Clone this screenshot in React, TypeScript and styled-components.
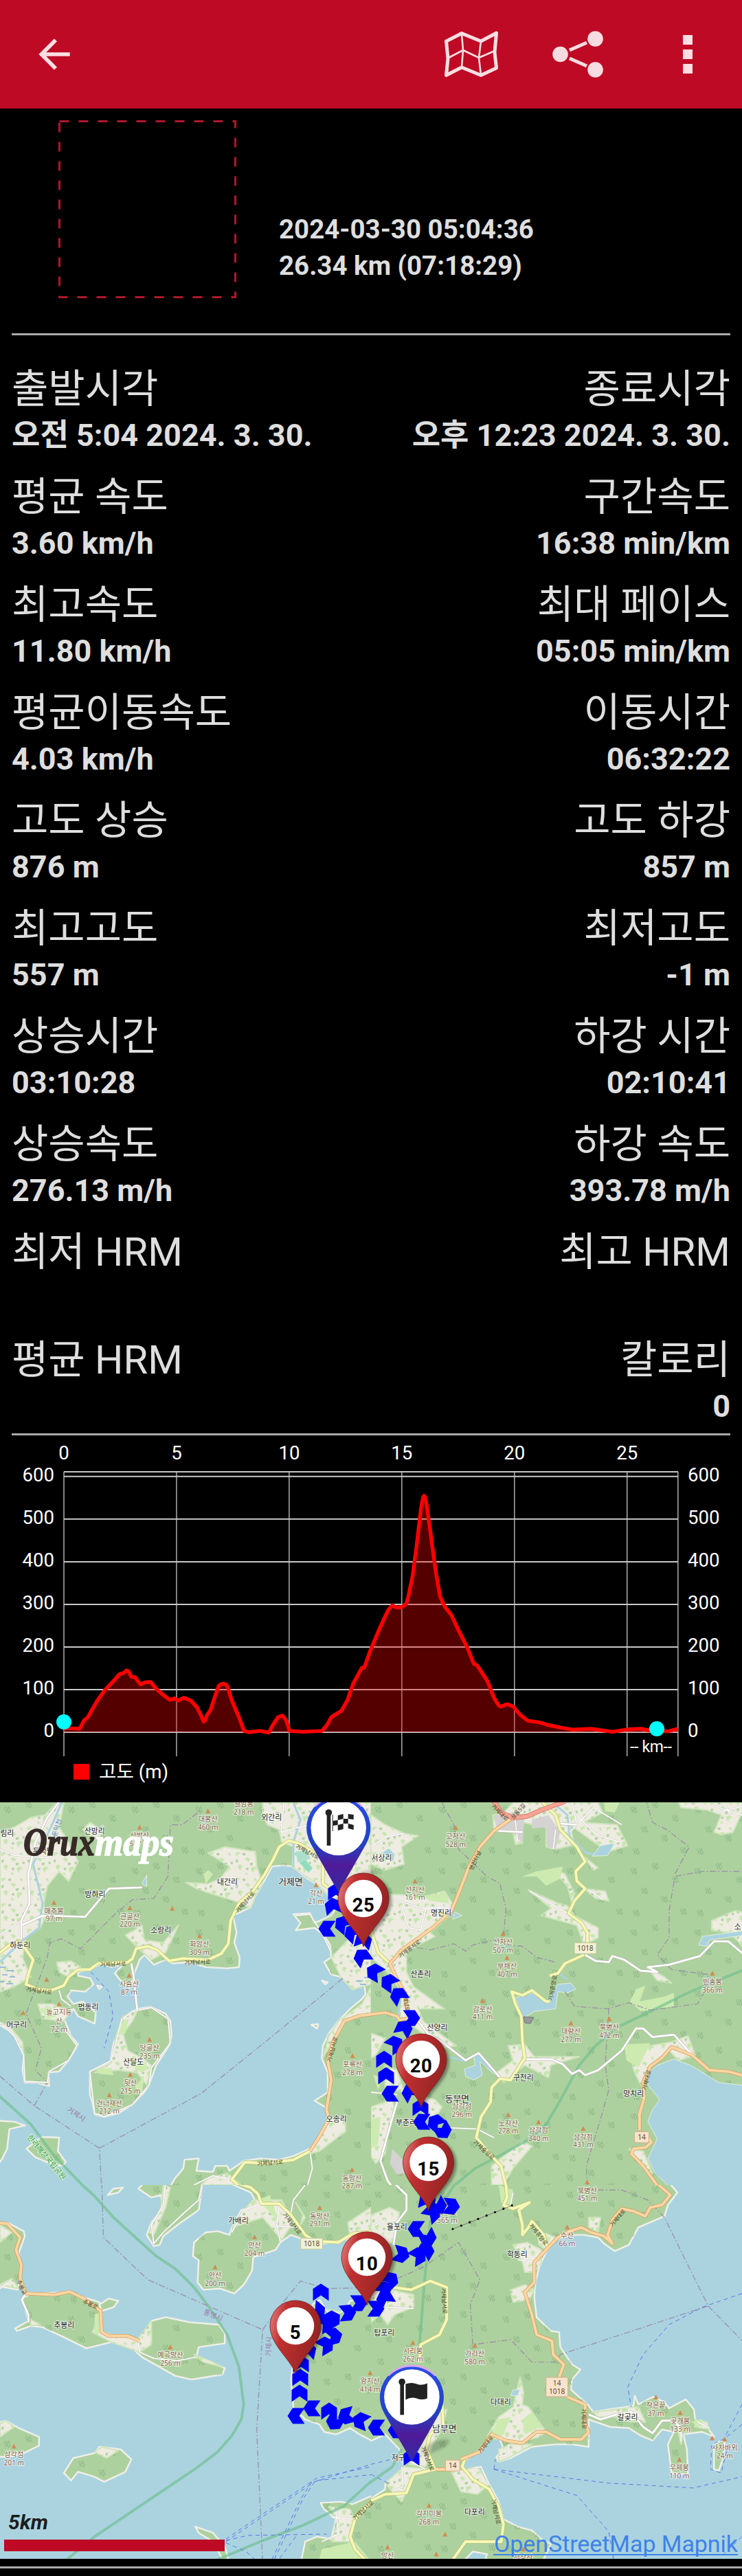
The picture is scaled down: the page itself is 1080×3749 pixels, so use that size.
import styled, { createGlobalStyle } from "styled-components";

const GlobalStyle = createGlobalStyle`
  body {
    margin: 0;
    background: #000;
    font-family: Roboto, "Noto Sans CJK KR", sans-serif;
  }
`;

const Page = styled.div`
  width: 1080px;
  height: 3749px;
  overflow: hidden;
  background: #000;
  color: #dedede;
`;

const Toolbar = styled.header`
  display: flex;
  align-items: center;
  height: 158px;
  padding: 0 72px 0 45px;
  box-sizing: border-box;
  background: #be0a25;
`;

const Spacer = styled.div`
  flex: 1;
`;

const Actions = styled.div`
  display: flex;
  align-items: center;
  gap: 78px;
`;

const Summary = styled.section`
  display: flex;
  height: 327px;
  padding-left: 84px;
  box-sizing: border-box;
`;

const SummaryText = styled.div`
  padding: 149px 0 0 60px;
  font-size: 38.5px;
  font-weight: 700;
  line-height: 53px;
`;

const TypeBox = styled.svg`
  margin-top: 16px;
`;

const Divider = styled.hr`
  height: 3px;
  margin: 0 17px;
  border: 0;
  background: #aaa;
`;

const Stats = styled.section`
  display: grid;
  grid-template-columns: auto auto;
  grid-auto-rows: 157px;
  height: 1598px;
  padding: 39px 17px 0;
  box-sizing: border-box;
`;

const Stat = styled.div<{ $right?: boolean }>`
  text-align: ${({ $right }) => ($right ? "right" : "left")};
  white-space: nowrap;
`;

const StatLabel = styled.div`
  height: 74px;
  font-size: 58px;
  font-weight: 400;
  line-height: 79px;
`;

const StatValue = styled.div`
  height: 66px;
  font-size: 45px;
  font-weight: 700;
  line-height: 66px;
`;

const ChartSvg = styled.svg`
  display: block;
  font-size: 27.6px;
  fill: #fff;
`;

const MapSvg = styled.svg`
  display: block;
`;

const Footer = styled.div`
  padding-top: 11px;
  height: 14px;
  box-sizing: content-box;
`;

const FooterLine = styled.div`
  height: 3px;
  background: #aaa;
`;

/* ---------- stats ---------- */

const stats: [string, string, string, string][] = [
  ["출발시각", "오전 5:04 2024. 3. 30.", "종료시각", "오후 12:23 2024. 3. 30."],
  ["평균 속도", "3.60 km/h", "구간속도", "16:38 min/km"],
  ["최고속도", "11.80 km/h", "최대 페이스", "05:05 min/km"],
  ["평균이동속도", "4.03 km/h", "이동시간", "06:32:22"],
  ["고도 상승", "876 m", "고도 하강", "857 m"],
  ["최고고도", "557 m", "최저고도", "-1 m"],
  ["상승시간", "03:10:28", "하강 시간", "02:10:41"],
  ["상승속도", "276.13 m/h", "하강 속도", "393.78 m/h"],
  ["최저 HRM", "", "최고 HRM", ""],
  ["평균 HRM", "", "칼로리", "0"],
];

/* ---------- altitude chart ---------- */

// km, metres
const profile: [number, number][] = [
  [0, 9], [0.35, 9], [0.7, 8], [0.9, 28], [1.06, 35], [1.48, 74], [1.84, 100],
  [2.2, 120], [2.47, 136], [2.65, 139], [2.78, 145], [2.87, 143], [3, 130],
  [3.16, 129], [3.4, 112], [3.6, 117], [3.85, 118], [4.1, 102], [4.4, 88],
  [4.7, 76], [4.9, 80], [5.07, 74], [5.32, 81], [5.64, 74], [5.9, 59],
  [6.1, 38], [6.2, 25], [6.28, 28], [6.35, 40], [6.5, 51], [6.7, 83],
  [6.87, 108], [6.95, 112], [7.08, 114], [7.2, 112], [7.27, 106], [7.46, 74],
  [7.78, 34], [8, 3], [8.2, 0], [8.7, 3], [9.1, -1], [9.25, 15], [9.5, 35],
  [9.7, 39], [9.87, 28], [10.02, 3], [10.6, 1], [11.45, 3], [11.66, 15],
  [11.87, 35], [12.33, 51], [12.6, 77], [12.84, 114], [13.23, 151],
  [13.33, 151], [13.6, 191], [13.97, 238], [14.2, 265], [14.4, 287],
  [14.58, 298], [14.7, 294], [14.85, 292], [15, 294], [15.2, 301],
  [15.3, 321], [15.48, 367], [15.65, 435], [15.86, 528], [15.95, 552],
  [15.98, 555], [16.03, 552], [16.1, 535], [16.28, 466], [16.5, 380],
  [16.7, 318], [16.9, 295], [17.2, 275], [17.5, 241], [17.9, 200],
  [18.2, 160], [18.33, 158], [18.8, 120], [19.1, 80], [19.3, 63], [19.4, 60],
  [19.68, 66], [19.95, 60], [20.27, 40], [20.6, 27], [21.1, 23], [21.5, 17],
  [22.15, 10], [22.6, 6], [23.4, 8], [24.35, 1], [25.1, 7], [25.6, 8],
  [26, 4], [26.8, 2], [27.26, 8],
];

const kmX = (km: number) => 93 + km * 32.79;
const altY = (m: number) => 432 - m * 0.6203;
const line = profile
  .map(([km, m]) => `${kmX(km).toFixed(1)},${altY(m).toFixed(1)}`)
  .join(" L");

const Chart = () => (
  <ChartSvg width="1080" height="534" viewBox="0 0 1080 534">
    <g stroke="#c8c8c8" fill="none">
      <path strokeWidth="2" d="M93,53 H987" />
      {[0, 100, 200, 300, 400, 500, 600].map((m) => (
        <path key={m} strokeWidth="2" d={`M93,${altY(m)} H987`} />
      ))}
      {[0, 5, 10, 15, 20, 25, 27.26].map((km) => (
        <path key={km} strokeWidth="1.3" d={`M${kmX(km)},53 V467`} />
      ))}
    </g>
    <path d={`M93,432 L${line} L987,432Z`} fill="#f00" fillOpacity=".33" />
    <path
      d={`M${line}`}
      fill="none"
      stroke="#f00"
      strokeWidth="5.4"
      strokeLinejoin="round"
    />
    <circle cx="93" cy="417" r="11" fill="#0ff" />
    <circle cx="956" cy="427" r="11" fill="#0ff" />
    {[0, 5, 10, 15, 20, 25].map((km) => (
      <text key={km} x={kmX(km)} y="34.5" textAnchor="middle">
        {km}
      </text>
    ))}
    {[0, 100, 200, 300, 400, 500, 600].map((m) => (
      <g key={m}>
        <text x="79" y={altY(m) + 7} textAnchor="end">
          {m}
        </text>
        <text x="1001" y={altY(m) + 7}>
          {m}
        </text>
      </g>
    ))}
    <text x="917" y="461" fontSize="23" textLength="61">
      -- km--
    </text>
    <rect x="107" y="478" width="23" height="23" fill="#f00" />
    <text x="144" y="499" textLength="101">
      고도 (m)
    </text>
  </ChartSvg>
);

/* ---------- map ---------- */

type Tile = {
  x: number;
  y: number;
  h: number;
  land: string;
  fields: string;
  grass?: string;
  urban?: string;
  lakes?: string;
  rivers?: string;
  trunk?: string;
  primary: string;
  secondary: string;
  minor: string;
  lanes?: string;
  border: string;
  park: string;
  ferry?: string;
};

// Every tile draws on its own 1568 x 1568 grid.
const GRID = 1568;
const TILE_W = 540;

const tiles: Tile[] = [
  {
    x: 0, y: -3, h: 560,
    land: "M-20,905 L40,940 90,985 100,1040 95,1100 105,1150 150,1150 208,1165 205,1110 250,1105 290,1060 330,995 300,960 270,890 310,850 330,880 400,910 405,865 350,820 310,830 285,800 300,775 360,780 395,750 380,725 330,715 330,700 385,690 430,665 470,680 520,670 485,705 510,735 550,765 570,700 590,650 610,630 650,670 700,650 730,665 800,660 870,680 960,685 1010,680 1013,640 990,580 1000,540 985,470 1050,440 1080,390 1110,340 1150,270 1200,265 1235,270 1300,320 1350,350 1400,400 1420,440 1400,470 1330,500 1310,460 1240,465 1270,500 1250,530 1330,520 1370,550 1395,590 1400,640 1370,660 1400,710 1440,720 1490,770 1540,755 1545,790 1530,810 1480,850 1430,900 1390,950 1365,1000 1360,1050 1385,1110 1385,1190 1330,1225 1375,1250 1390,1300 1360,1360 1310,1420 1240,1450 1180,1465 1100,1460 1030,1470 970,1510 960,1490 910,1490 900,1515 830,1510 840,1460 780,1465 775,1500 740,1540 710,1590 H1600 V-20 H-20Z M580,850 L640,842 700,870 720,900 725,960 715,1000 660,1080 630,1160 610,1190 560,1240 500,1275 440,1290 400,1280 390,1230 380,1200 380,1105 430,1085 465,1070 480,990 500,950 515,890 545,870Z M-20,1305 L60,1310 105,1325 40,1340 30,1420 10,1460 -20,1500Z M112,1420 L175,1372 250,1375 245,1430 278,1475 265,1490 200,1475 150,1455Z M1315,915 L1345,912 1340,930Z M1360,735 L1385,742 1375,750Z M410,755 L430,760 420,770Z",
    fields: "M0,130 L60,110 130,70 190,60 240,10 270,10 250,110 290,170 330,250 290,330 250,290 200,350 185,420 190,480 170,520 110,560 95,640 130,720 60,760 0,780 Z M1110,50 L1130,100 1180,120 1190,170 1240,190 1235,270 1350,350 1400,400 1568,400 V10 H1110Z M880,215 L950,190 1080,210 1085,270 1110,340 1080,390 1060,440 990,410 890,380 830,360 785,335 880,340 930,320 970,270Z M530,550 L600,510 610,570 690,580 755,508 730,560 700,620 640,650 580,600Z M160,830 L220,830 300,860 270,900 180,890Z M350,120 L380,90 440,130 400,160Z M240,660 L300,655 340,680 290,720 250,700Z M0,905 L40,920 95,985 100,1040 60,960Z M1430,900 L1530,830 1568,760 V870 L1460,890 1400,990 1365,1050 1390,960Z M1400,640 L1500,540 1568,540 V750 L1490,770 1440,720Z M1390,1300 L1460,1300 1460,1350 1350,1430 1310,1440Z M490,960 L520,880 580,860 560,900 520,950 540,1020 600,1050 640,1080 620,1160 580,1110 500,1100 400,1110 470,1070Z M880,1540 L960,1520 1020,1568 H850Z",
    grass: "M860,300 L880,285 900,300 870,340Z M410,1095 L470,1090 480,1120 420,1115Z M570,1170 L610,1120 600,1200Z M500,960 L520,900 545,890 530,950Z M540,1070 L600,1060 630,1090 600,1110Z M170,850 L210,840 240,880 200,890Z",
    lakes: "M425,110 L435,100 440,130Z M600,340 L620,305 620,350Z",
    rivers: "M265,0 L215,110 140,260 180,420 165,520 85,580 0,660 M1240,10 L1270,80 1240,170 1240,270",
    primary: "M1600,870 L1520,878 1455,900 1410,980 1385,1060 1400,1140 1380,1260 1390,1300 1350,1370 1310,1430",
    secondary: "M-20,635 L40,590 85,575 140,650 120,710 110,750 160,770 215,775 270,755 290,720 330,690 380,690 415,665 540,660 560,645 575,605 625,595 665,610 715,655 770,645 880,650 935,625 965,585 975,490 1010,420 1070,370 1120,300 1155,240 1180,190 1220,165 1260,175 1330,215 M1365,250 L1365,340 1420,380 M1030,1590 L980,1545 1035,1475 1130,1480 1240,1465 1310,1430",
    minor: "M255,0 L200,70 150,170 120,300 125,420 90,490 90,560 M90,510 L180,470 360,475 460,360 600,355 M555,665 L565,720 580,855",
    lanes: "M0,200 L60,225 210,235 M0,550 L90,490 M1200,10 L1188,130 1300,100 M0,905 L60,960 100,1040 105,1145 200,1150 208,1105 290,1060 325,1000 270,930 M250,775 L260,810 300,840 M520,890 L560,860 640,845 710,890 720,990 640,1090 630,1160 560,1240 440,1290 400,1275 380,1105 470,1060 515,890 M1250,470 L1310,465 1360,540 1400,620 M1310,1430 L1320,1500 1300,1568 M820,1568 L900,1530 980,1545",
    border: "M0,1125 L145,1245 420,1418 430,1590 M420,1418 L850,1195 1140,970 1450,725 M145,1245 L200,1150 150,1100 175,1010 110,870 200,640 210,580 260,565 340,605 490,460 560,405 650,400 710,310 720,100 770,100 850,40",
    park: "M-20,1190 L130,1320 230,1450 370,1590",
    ferry: "M385,700 L460,780 478,880 440,1010",
  },
  {
    x: 540, y: -3, h: 560,
    land: "M-30,-30 H1600 V1600 H-30Z",
    fields: "M0,380 L130,385 200,400 310,370 350,430 340,460 250,540 270,555 200,590 150,620 150,700 180,760 310,850 200,850 220,900 360,1000 300,1010 150,900 120,880 130,780 60,690 0,640Z M0,60 L60,100 140,135 200,145 130,190 140,260 60,285 0,260Z M515,60 L560,50 600,10 960,10 980,50 900,90 1040,100 1085,185 1000,210 840,100 860,180 780,200 740,190 740,110 640,90 640,175 610,180 600,130 520,125Z M1300,10 H1568 V50 L1530,130 1480,140 1450,130 1480,60 1420,40 1310,30Z M665,365 L790,420 830,430 860,470 900,490 960,520 960,560 900,590 870,510 720,470 760,440Z M770,285 L820,300 860,380 850,420 830,350Z M900,360 L990,370 1005,410 950,400Z M580,1000 L650,995 690,1045 880,1045 760,1080 750,1130 650,1080 560,1150 530,1110 600,1060Z M1090,1000 L1180,1000 1270,985 1340,960 1370,1040 1300,1060 1260,1020 1180,1080 1150,1180 1110,1100Z M0,950 L60,970 20,1040 0,1050Z M60,1080 L110,1100 140,1190 60,1170Z M190,1200 L270,1220 300,1250 260,1310 220,1280Z M0,1250 L90,1220 100,1260 70,1360 60,1440 20,1480 0,1450Z M1440,490 L1540,450 1590,460 V620 L1520,540 1440,530Z M1165,680 L1240,720 1270,745 1210,735Z M510,1490 L640,1390 680,1410 600,1500 560,1568 H510Z M1090,1420 L1150,1430 1190,1520 1140,1490Z M900,230 L960,275 940,285Z",
    grass: "M635,312 L700,290 810,270 800,320 740,348 700,310Z M1095,820 L1120,770 1160,755 1135,820 1240,800 1280,785 1280,840 1140,860Z M985,10 H1050 L1030,50 990,45Z M1070,995 L1180,990 1130,1090 1080,1060Z M0,1300 L40,1290 30,1400 0,1420Z M10,1120 L50,1130 30,1180Z M210,390 L320,380 330,420 250,410Z",
    urban: "M520,60 L600,50 650,60 640,175 600,130 530,125Z M680,80 L750,60 800,130 780,200 745,190 740,110 680,115Z M90,1420 L140,1470 140,1520 110,1525 80,1480Z",
    lakes: "M610,805 L680,785 745,825 790,750 845,745 865,770 830,785 790,780 780,850 690,860 650,885 640,880Z M1175,1110 L1210,1080 1280,1055 1350,1080 1420,1120 1470,1150 1600,1165 V1600 H1290 L1200,1520 1170,1460 1210,1380 1170,1310 1190,1260 1220,1220 1170,1160Z M935,228 L970,185 1030,175 1000,225Z M395,1095 L440,1080 435,1045 455,1035 545,1120 520,1115 460,1065 470,1120 435,1140 400,1125Z M1385,590 L1400,555 1590,530 V548 L1430,570 1420,595Z M345,485 L355,455 385,470Z M45,215 L75,195 100,220 95,250Z",
    rivers: "M780,20 L830,60 840,150 910,215 950,220 M800,710 L830,730 M330,1045 L400,1065 M110,900 L130,780",
    trunk: "M510,-10 L550,50 600,72 660,65 720,40 820,5",
    primary: "M600,70 L520,125 460,190 410,280 370,380 340,450 260,520 130,610 80,665 110,730 140,780 155,850 M-20,875 L60,865 110,880 120,895 155,890 M1600,1130 L1510,1105 1430,1100 1360,1040 1270,1005 1230,1050 1180,1085 1150,1150 1155,1210 1135,1280 1135,1345 M1175,1375 L1185,1395 1160,1415 1110,1420 1100,1440 1150,1490 1225,1590",
    secondary: "M725,10 L780,60 800,120 870,190 905,250 865,290 870,330 905,360 860,410 835,460 890,500 915,540 915,580 M900,630 L820,665 790,705 755,715 M755,820 L740,820 680,775 640,795 595,780 610,830 635,880 640,980 650,1050 590,1140 545,1135 510,1170 505,1230 465,1290 445,1375 510,1450 550,1490 575,1590 M0,530 L30,620 80,665",
    minor: "M905,630 L950,655 1005,660 1020,635 1070,650 1140,695 1210,700 1170,680 1260,670 1390,635 1450,575 1510,575 1590,640 M650,1055 L760,1055 810,1075 850,1115 880,1100 905,1120 960,1100 1060,1020 1120,930 1150,930 1190,965 1280,955 1340,1020 1370,1040 M200,900 L240,950 300,985 400,1060 455,1030 545,1130 M110,1230 L80,1330 40,1470 70,1550 100,1590 M540,125 L640,130 M790,95 L870,100",
    lanes: "M0,190 L60,150 140,135 M75,400 L220,440 340,435 M130,430 L160,520 210,530 235,430 M850,10 L870,100 840,130 M870,60 L950,140 1050,170 M880,90 L940,30 1060,100 M1440,20 L1568,60 M1460,50 L1568,25 M1490,10 L1520,60 M920,365 L980,405 M670,370 L830,460 M330,1335 L450,1340 520,1375 M0,1190 L110,1200 M780,120 L770,200 M610,80 L620,170",
    border: "M300,10 L350,100 370,200 490,310 545,340 570,440 560,560 430,590 400,615 350,585 250,610 190,600 M570,590 L640,595 700,640 780,660 M820,780 L860,840 1000,850 1090,825 1180,855 1380,830 1410,780 1425,710 1270,690 1210,630 1260,560 1260,450 1285,310 1400,290 1568,290 M1285,300 L1345,190 1250,120 1190,90 1165,10 M1005,850 L990,1080 1005,1180 970,1300 910,1490 915,1590",
    park: "M1590,685 L1350,780 1150,875 1040,925 950,1000 880,1080 790,1240 740,1320 670,1380 560,1440 440,1500 340,1580",
  },
  {
    x: 0, y: 557, h: 569,
    land: "M-20,150 L30,150 100,185 105,205 80,270 90,340 75,420 20,410 -20,400Z M95,455 L130,435 290,430 420,470 430,590 470,600 585,620 640,545 700,530 800,550 925,560 950,595 950,635 840,650 830,690 900,715 950,735 940,760 810,780 740,765 600,690 560,655 470,630 365,655 280,615 180,570 130,565 70,585 65,575 120,545Z M420,480 L460,455 500,465 480,490 430,505Z M-20,955 L25,945 80,975 165,1010 165,1045 100,1075 40,1090 -20,1090Z M270,1155 L310,1095 400,1075 420,1050 510,1060 555,1100 530,1150 440,1190 400,1170 330,1150 300,1185Z M455,40 L480,15 520,10 500,30Z M585,15 L640,50 680,40 690,90 640,150 620,200 650,245 675,240 690,205 750,160 840,100 858,-20 H620Z M940,-20 H1600 V185 L1480,215 1370,235 1300,225 1230,200 1185,230 1165,260 1070,290 1065,345 1030,400 990,435 930,415 860,420 835,390 840,300 815,285 820,230 870,190 920,185 970,200 980,170 1020,100 1090,80 1060,30Z M1600,440 L1480,465 1460,500 1400,530 1350,460 1320,480 1380,560 1330,640 1240,700 1230,780 1240,890 1290,940 1350,960 1370,990 1420,1000 1480,975 1520,1000 1600,1040Z M1355,1275 L1440,1270 1490,1280 1600,1235 V1520 H1270 L1290,1430 1340,1410 1400,1420 1420,1340 1370,1300Z M825,1370 L900,1395 950,1450 970,1520 940,1500 900,1430 840,1395Z",
    fields: "M0,160 L50,190 0,230Z M0,400 L50,375 80,415Z M390,590 L430,500 430,590 580,620 640,545 640,640 590,670 470,630Z M0,955 L25,945 60,970 0,1010Z M400,1070 L430,1050 500,1065 450,1095Z M1070,60 L1190,60 1240,150 1190,220 1110,130 980,170 1030,100Z M1290,130 L1250,70 1280,120 1270,160Z M1470,150 L1568,90 V200 L1480,215Z M690,0 L720,10 700,90 650,200 630,190 680,90Z M1390,1290 L1480,1300 1500,1350 1480,1430 1400,1430 1430,1350Z M820,680 L900,710 940,730 860,710Z M130,540 L170,560 130,565Z M1390,500 L1440,510 1400,530Z",
    grass: "M400,520 L430,510 430,580 400,600Z M1360,1460 L1500,1430 1560,1500 H1350Z M1470,1500 L1480,1400 1520,1470Z M1180,150 L1090,60 1140,40Z",
    primary: "M-20,150 L30,155 85,210 68,260 90,320 85,375 110,435 230,440 295,428 355,455 425,505 430,590 460,605 540,605 590,625",
    secondary: "M960,-20 L1060,10 1090,35 1105,75 1180,75 1230,120 1290,200 1330,225 1430,230 1490,195 1590,185 M1590,1250 L1500,1340 1480,1410 1500,1460 1550,1510",
    minor: "M110,435 L92,460 120,520 120,550",
    lanes: "M585,630 L590,670 650,695 750,705 830,690 M700,-10 L690,80 640,160 650,235 690,190 780,110 840,60 855,-10 M980,190 L1030,100 1105,75 M1180,80 L1170,160 1185,230 M1170,165 L1260,170 M1290,0 L1240,60 1230,110 M1400,1330 L1490,1340 M1420,1310 L1430,1400 1360,1430 M0,415 L40,390",
    border: "M430,-10 L437,210 625,380 1110,580 1085,980 1110,1510 M1110,580 L1180,490 1270,385 1380,415 1568,412",
    park: "M325,-20 L400,45 480,130 660,285 740,335 820,410 880,485 960,600 1010,730 1030,880 1020,940 980,1005 920,1070 830,1135 400,1410 260,1520 M900,1510 L1100,1430 1280,1365 1390,1315 1450,1290 1590,1170",
    ferry: "M955,1430 L1110,1330 1330,1190 1568,1120 M955,1420 L1110,1320 1340,1175 1568,1130 M1340,1185 L1568,1162 M1330,1190 L1280,1260 1160,1500 M1318,1190 L1270,1260 1150,1500 M955,1425 L1050,1405 1380,1400 M955,1435 L1040,1470 1075,1500 M1250,1410 L1180,1500",
  },
  {
    x: 540, y: 557, h: 569,
    land: "M-20,-20 H1250 L1295,30 1255,80 1240,125 1130,170 1090,240 1030,265 985,235 960,210 900,200 840,200 780,220 740,270 710,330 695,390 690,450 700,530 760,585 795,590 800,650 850,720 885,740 850,780 845,820 915,880 940,910 1000,900 1080,890 1110,885 1115,845 1130,880 1190,850 1240,870 1260,895 1330,860 1365,900 1370,940 1420,970 1450,1010 1400,990 1320,1000 1335,1060 1340,1160 1270,1155 1255,1040 1280,990 1230,980 1190,1025 1140,1005 1090,975 1010,970 920,940 920,1050 850,1040 780,1040 680,1050 590,1095 540,1110 530,1090 560,1060 545,1020 500,1010 460,1060 390,1110 395,1150 450,1130 500,1200 540,1270 560,1340 620,1370 680,1385 720,1420 760,1440 720,1520 H480 L490,1480 430,1470 380,1520 H-20 V1270 L60,1220 60,1195 130,1210 140,1130 120,1060 60,1000 -20,1035Z M1450,1035 L1495,1025 1490,1090 1470,1145 1450,1140Z",
    fields: "M0,420 L90,420 180,440 180,490 100,520 70,560 40,520 0,550Z M0,120 L80,90 120,110 100,220 40,260 0,180Z M490,1010 L540,930 600,890 630,770 645,830 640,880 665,890 740,990 710,1010 600,1040 560,1020Z M600,240 L660,230 720,260 720,310 690,350 650,350 640,310Z M590,420 L650,400 690,420 670,460 600,470Z M340,1150 L400,1140 450,1130 500,1200 450,1240 380,1230Z M250,900 L320,900 300,980 260,1040 230,1130 160,1120 190,1090 240,1000Z M60,1195 L140,1130 250,1140 180,1160 130,1270 90,1230Z M1090,890 L1130,890 1160,950 1110,950 1040,940Z M940,910 L1080,895 1090,930 960,930Z M1370,940 L1420,950 1430,980 1370,970Z M920,130 L970,130 960,190 920,170Z M700,180 L780,210 740,260 710,240Z M1295,970 L1320,1000 1310,1040Z M540,1060 L590,1040 680,1040 590,1090 540,1110Z",
    grass: "M540,0 L600,20 590,80 550,70Z M480,1040 L540,940 590,930 560,1000Z M640,940 L680,910 720,970 650,1000Z M1350,950 L1400,940 1400,970Z M680,190 L760,210 740,240Z",
    lakes: "M590,845 L600,822 630,820 620,845Z",
    primary: "M1205,-10 L1265,40 1230,80 1180,90 1160,125 1110,105 1060,95 1020,140 1000,200 1020,235 985,205 930,190 890,170 840,185 790,210 690,310 690,390 650,430 680,520 700,600 765,625 770,680 815,720 795,770 M830,850 L905,880 905,960 920,990 890,1020 800,1020 740,990 700,990 640,1035 570,1025 510,1000 460,1070 380,1100 M320,1140 L275,1140",
    secondary: "M570,-10 L575,50 560,80 600,95 670,70 625,100 640,160 640,200 665,170 680,145 730,200 745,250 M90,410 L170,420 250,385 320,410 320,540 290,600 210,640 205,710 M300,870 L305,960 250,1000 235,1060 270,1140 180,1160 150,1235 60,1240 -20,1275 M400,1090 L385,1130 430,1180 500,1220 540,1290 560,1360 550,1430 480,1430 400,1430 340,1510",
    minor: "M95,-10 L150,40 150,100 110,150 95,240 M920,920 L970,940 1040,920 1100,910 1150,970 1190,995 1230,945 1270,945 1310,970",
    lanes: "M60,490 L180,495 M620,300 L700,310 720,270 M700,290 L710,340 M130,1130 L135,1210 90,1230 M170,1110 L230,1140 M430,1135 L465,1130 500,1200 M540,1090 L580,1080 580,1040 M600,30 L590,80 M1310,970 L1310,1030 M1380,950 L1430,975 M0,170 L60,140",
    border: "M110,375 L220,330 370,230 460,380 420,480 430,640 590,620 680,710 780,710 800,680 1425,485 1240,130 1170,60 1060,20 960,20 M1425,485 L1590,645",
    park: "M365,-20 L250,150 225,400 205,640 M-20,1205 L90,1130 130,1060",
    ferry: "M1568,435 L1400,490 1260,560 1150,680 1085,810 1100,890 M520,1140 L1000,1195 1360,1215 1568,1170 M520,1140 L525,1100 M520,1140 L870,1245 1005,1390 1025,1500 M1568,880 L1490,1020 M1568,960 L1490,1020 1440,1040 1435,1140 1480,1155 1510,1040 M1568,1410 L1480,1490 M0,1120 L130,1090 M0,1160 L80,1200",
  },
];

const Shape = styled.path`
  vector-effect: non-scaling-stroke;
  stroke-linejoin: round;
`;

const Stroke = styled(Shape)<{ $color: string; $width: number; $dash?: string }>`
  fill: none;
  stroke: ${({ $color }) => $color};
  stroke-width: ${({ $width }) => $width}px;
  stroke-dasharray: ${({ $dash }) => $dash ?? "none"};
`;

const MapTile = ({ tile: t }: { tile: Tile }) => (
  <svg
    x={t.x}
    y={t.y}
    width={TILE_W}
    height={t.h}
    viewBox={`0 0 ${GRID} ${GRID}`}
    preserveAspectRatio="none"
  >
    <Shape d={t.land} fill="#add19e" stroke="#f2efe9" strokeWidth="2.4" />
    <Shape d={t.land} fill="url(#trees)" />
    <Shape d={t.fields} fill="#eeebe1" stroke="#cfe5bd" strokeWidth="2" />
    <Shape d={t.fields} fill="url(#fields)" />
    <path d={t.grass} fill="#cdebb0" />
    <path d={t.urban} fill="#d4d2d2" />
    <Stroke d={t.rivers} $color="#aad3df" $width={3} />
    <Shape d={t.lakes} fill="#aad3df" stroke="#e4eee0" strokeWidth="1" />
    <Stroke d={t.park} $color="#6fbf8f" $width={4} opacity=".65" />
    <Stroke d={t.border} $color="#9a83aa" $width={1.4} $dash="9 3 2 3" opacity=".8" />
    <Stroke d={t.ferry} $color="#5b74ea" $width={1} $dash="6 5" />
    <Stroke d={t.lanes} $color="#c9c5c0" $width={2.4} />
    <Stroke d={t.lanes} $color="#fff" $width={1.5} />
    <Stroke d={t.minor} $color="#b9b5b0" $width={4} />
    <Stroke d={t.minor} $color="#fff" $width={2.8} />
    <Stroke d={t.secondary} $color="#b9bd78" $width={5.4} />
    <Stroke d={t.secondary} $color="#f5f8b4" $width={4} />
    <Stroke d={t.primary} $color="#d09a5c" $width={5.4} />
    <Stroke d={t.primary} $color="#fcd6a4" $width={4} />
    <Stroke d={t.trunk} $color="#d2786a" $width={7} />
    <Stroke d={t.trunk} $color="#f5a494" $width={5.4} />
  </svg>
);

// tile index, grid x and y to map pixels
const place = (tile: number, x: number, y: number) => ({
  x: tiles[tile].x + (x * TILE_W) / GRID,
  y: tiles[tile].y + (y * tiles[tile].h) / GRID,
});

const Village = styled.text<{ $town?: boolean }>`
  font-family: "Noto Sans", "Noto Sans CJK KR", sans-serif;
  font-size: ${({ $town }) => ($town ? 12.8 : 10.8)}px;
  text-anchor: middle;
  fill: #222;
  stroke: #fff;
  stroke-opacity: 0.7;
  stroke-width: 2px;
  paint-order: stroke;
`;

const Peak = styled(Village)`
  font-size: 10.2px;
  fill: #8a6248;
`;

const RoadName = styled(Village)`
  font-size: 8.2px;
  fill: #4b4426;
  stroke-width: 0;
`;

const villages: [number, number, number, string, boolean?][] = [
  [0, 30, 146, "림리"], [0, 400, 137, "산방리"], [0, 1148, 82, "외간리"],
  [0, 402, 396, "방하리"], [0, 182, 218, "둔덕면"], [0, 961, 343, "내간리"],
  [0, 1228, 345, "거제면", true], [0, 680, 540, "소랑리"],
  [0, 85, 601, "하둔리"], [0, 373, 854, "법동리"], [0, 70, 927, "어구리"],
  [0, 564, 1079, "산달도"], [0, 1422, 1310, "오송리"],
  [1, 45, 246, "서상리"], [1, 296, 469, "명진리"], [1, 210, 719, "산촌리"],
  [1, 280, 938, "산양리"], [1, 644, 1142, "구천리"],
  [1, 364, 1229, "동부면", true], [1, 148, 1325, "부춘리"],
  [1, 1110, 1206, "망치리"], [1, 1550, 526, "소"],
  [2, 1007, 154, "가배리"], [2, 271, 574, "추봉리"],
  [3, 110, 179, "율포리"], [3, 618, 288, "학동리"], [3, 56, 604, "탑포리"],
  [3, 310, 988, "남부면", true], [3, 548, 882, "다대리"],
  [3, 1085, 942, "갈곶리"], [3, 130, 1104, "저구리"],
  [3, 438, 1323, "다포리"],
];

// x and y mark the baseline of the name
const peaks: [number, number, number, string, string][] = [
  [0, 879, 88, "대봉산", "460 m"], [0, 1030, 26, "월암봉", "218 m"],
  [0, 590, 155, "산방산", "507 m"], [0, 228, 461, "매주봉", "97 m"],
  [0, 549, 483, "큰골산", "220 m"], [0, 843, 597, "화암산", "309 m"],
  [0, 1336, 389, "각산", "21 m"], [0, 546, 758, "사슴산", "87 m"],
  [0, 632, 1019, "당골산", "235 m"], [0, 551, 1162, "뒷산", "215 m"],
  [0, 462, 1245, "건너재산", "212 m"], [0, 1490, 1086, "포록산", "278 m"],
  [0, 1488, 1550, "동망산", "287 m"],
  [1, 358, 156, "고자산", "528 m"], [1, 186, 374, "선지산", "161 m"],
  [1, 558, 588, "선자산", "507 m"], [1, 575, 686, "부채산", "407 m"],
  [1, 472, 861, "감로산", "411 m"], [1, 845, 952, "대량산", "277 m"],
  [1, 1007, 935, "북병산", "472 m"], [1, 1443, 750, "빈송봉", "366 m"],
  [1, 384, 1258, "삼각점", "296 m"], [1, 580, 1326, "노자산", "278 m"],
  [1, 708, 1355, "삼각점", "340 m"], [1, 897, 1382, "삼각점", "431 m"],
  [2, 1351, 134, "동망산", "291 m"], [2, 1076, 252, "안산", "204 m"],
  [2, 909, 373, "안산", "200 m"], [2, 720, 693, "예곡망산", "256 m"],
  [2, 59, 1091, "삼각점", "201 m"], [2, 1564, 797, "왕지산", "414 m"],
  [3, 914, 32, "북병산", "451 m"], [3, 322, 118, "노자산", "565 m"],
  [3, 829, 212, "수산", "66 m"], [3, 177, 676, "시리봉", "262 m"],
  [3, 439, 686, "가라산", "580 m"], [3, 1204, 894, "작은끝", "37 m"],
  [3, 1307, 957, "곶개봉", "133 m"], [3, 1495, 1063, "사자바위", "24 m"],
  [3, 1303, 1144, "우제봉", "110 m"], [3, 245, 1329, "각지미봉", "268 m"],
  [3, 70, 1496, "망산", ""], [3, 643, 1504, "천장산", ""],
];

const summits: [number, number, number][] = [
  [0, 728, 440], [0, 197, 730], [0, 98, 865],
  [3, 313, 1400], [3, 276, 1480], [3, 1442, 1014],
];

const roadNames: [number, number, number, number, string][] = [
  [0, 1300, 210, 28, "거제남서로"], [0, 1036, 415, -48, "거제남서로"],
  [0, 478, 668, -2, "거제남서로"], [0, 835, 660, -2, "거제남서로"],
  [0, 165, 776, 9, "거제남서로"], [0, 1405, 1015, -74, "거제남서로"],
  [0, 1142, 1477, -5, "거제남서로"], [1, 440, 245, -65, "명진터널"],
  [1, 163, 605, -37, "거제동서로"], [1, 768, 765, -80, "거제중앙로"],
  [1, 1165, 1140, -75, "거제대로"], [1, 478, 1425, 42, "거제중앙로"],
  [1, 545, 50, 45, "거제대로"], [1, 622, 45, -48, "상동5길"],
  [1, 148, 820, 80, "거제남로"],
  [2, 92, 410, 65, "추봉교"], [2, 382, 478, 25, "추봉로"],
  [2, 1235, 155, 52, "거제남서로"], [2, 1535, 1305, -42, "거제남서로"],
  [3, 708, 198, 52, "거제중앙로"], [3, 1043, 132, -50, "거제대로"],
  [3, 310, 465, 87, "거제남서로"], [3, 900, 938, 88, "거제대로"],
  [3, 485, 1040, -50, "거제대로"], [3, 240, 1098, 68, "거제남서로"],
  [3, 528, 1310, 78, "거제남서로"],
];

const shields: [number, number, number, boolean, string[]][] = [
  [1, 906, 603, false, ["1018"]],
  [1, 1144, 1373, true, ["14"]],
  [2, 1317, 235, false, ["1018"]],
  [3, 786, 810, true, ["14", "1018"]],
  [3, 345, 1125, true, ["14"]],
];

// x, y, heading in degrees from north
const arrows: [number, number, number][] = [
  [599, 953, 0], [577, 914, -90], [548, 910, -90], [525, 900, -68],
  [504, 893, -105], [487, 902, -150], [479, 886, 0], [454, 882, -90],
  [431, 893, -90], [436, 860, 0], [437, 837, 0], [438, 817, 0],
  [448, 797, 12], [474, 790, 60], [486, 777, 75], [462, 741, 130],
  [484, 752, 60], [474, 758, 60], [467, 713, 0], [506, 743, 85],
  [522, 729, 90], [547, 737, 90], [560, 722, -30], [557, 708, 40],
  [568, 695, 45], [584, 658, 105], [609, 660, 60], [620, 652, 30],
  [623, 634, 155], [606, 621, -90], [629, 598, 45], [638, 588, 150],
  [657, 588, 95], [622, 580, 10], [645, 478, 150], [634, 466, -50],
  [614, 465, -90], [612, 444, 0], [597, 422, -30], [568, 424, -90],
  [562, 398, 0], [559, 374, 0], [575, 352, 55], [588, 329, 25],
  [599, 314, 90], [580, 281, -35], [566, 262, -55], [545, 247, -60],
  [527, 225, -35], [529, 201, 15], [513, 190, -45], [499, 177, -50],
  [476, 184, -90], [485, 151, -10], [489, 130, 0],
];

const kmPins: [number, number, number][] = [
  [5, 430, 762], [10, 534, 662], [15, 623.5, 524], [20, 613, 374],
  [25, 529, 140],
];

const KmPin = ({ km, x, y }: { km: number; x: number; y: number }) => (
  <g transform={`translate(${x} ${y})`}>
    <path
      transform="translate(4 3)"
      d="M0,69 C-4,48 -37,28 -37,0 A37,37 0 0 1 37,0 C37,28 6,44 0,69Z"
      fill="#000"
      opacity=".4"
      filter="url(#soft)"
    />
    <path
      d="M0,70 C-5,50 -37,28 -37,0 A37,37 0 0 1 37,0 C37,28 8,44 0,70Z"
      fill="url(#redPin)"
      stroke="#7a1d1d"
      strokeWidth=".8"
    />
    <circle r="27.2" fill="#fff" />
    <text
      y="18.5"
      textAnchor="middle"
      fontSize="27.5"
      fontWeight="700"
      letterSpacing=".6"
      fill="#000"
    >
      {km}
    </text>
  </g>
);

const FlagPin = ({ x, y, finish }: { x: number; y: number; finish?: boolean }) => (
  <g transform={`translate(${x} ${y})`}>
    <ellipse cx="34" cy="72" rx="22" ry="7" opacity=".18" filter="url(#soft)" transform="rotate(-22 34 72)" />
    <path
      d="M0,94 L-40,24 A46.5,46.5 0 1 1 40,24Z"
      fill="url(#bluePin)"
    />
    <path d="M-34,-31 A46,46 0 0 1 34,-31 A48,48 0 0 0 -34,-31Z" fill="#f3b8f5" stroke="#d9a5f5" strokeWidth="2" />
    <circle r="40.3" fill="#fff" />
    <rect x="-17" y="-22" width="5.6" height="48" fill="#222" />
    <circle cx="-14.3" cy="-22" r="4.8" fill="#222" />
    {finish ? (
      <g fill="#222">
        <path d="M-9,-19 L-8,-19 V5 L-9,5Z" />
        <path d="M-1,-18 L7,-20 V-13 L-1,-11Z M14,-20 L22,-19 V-12 L14,-13Z M-8,-10 L-1,-11 V-4 L-8,-3Z M7,-13 L14,-13 V-6 L7,-6Z M-1,-4 L7,-6 V2 L-1,4Z M14,-6 L22,-4 V3 L14,1Z" />
      </g>
    ) : (
      <path d="M-9,-19 Q0,-22 7,-19 T22.5,-20 V2 Q15,5 7,2 T-9,4Z" fill="#222" />
    )}
  </g>
);

const RouteMap = () => (
  <MapSvg width="1080" height="1101" viewBox="0 0 1080 1101">
    <defs>
      <pattern id="trees" width="270" height="250" patternUnits="userSpaceOnUse">
        <g fill="none" stroke="#83b080" strokeWidth="2.2">
          {[[30, 40], [120, 20], [205, 75], [75, 120], [160, 155], [240, 205], [40, 210]].map(
            ([x, y]) => (
              <g key={x} transform={`translate(${x} ${y})`}>
                <circle cx="-6" cy="-6" r="6" />
                <path d="M-6,0 V12 M7,-14 L0,7 H14Z M7,7 V14" />
              </g>
            )
          )}
        </g>
      </pattern>
      <pattern id="fields" width="110" height="104" patternUnits="userSpaceOnUse">
        <g transform="scale(.74)">
          <path
            fill="#c6e6ae"
            d="M5,10 L28,4 34,14 20,18 12,30Z M60,40 L78,34 92,44 80,58 70,50Z M112,10 L124,8 130,26 118,22Z M20,80 L34,72 50,84 38,92 42,104 26,98Z M95,90 L118,84 130,96 112,104 108,118 98,108Z M60,120 L74,116 78,130 66,128Z"
          />
          <path
            fill="#add19e"
            d="M45,12 L60,8 66,20 52,24Z M88,66 L108,62 104,76 92,78Z M8,48 L22,44 20,60 10,62Z M128,56 L142,60 138,72 130,70Z M66,92 L80,90 82,102 70,104Z"
          />
        </g>
      </pattern>
      <linearGradient id="redPin" x1="0" y1=".1" x2="1" y2=".4">
        <stop offset="0" stopColor="#e2807f" />
        <stop offset=".3" stopColor="#c03030" />
        <stop offset="1" stopColor="#942424" />
      </linearGradient>
      <linearGradient id="bluePin" x1="0" y1="0" x2="0" y2="1">
        <stop offset="0" stopColor="#2b4be6" />
        <stop offset=".5" stopColor="#2142c4" />
        <stop offset=".72" stopColor="#501a98" />
        <stop offset="1" stopColor="#332aa6" />
      </linearGradient>
      <filter id="soft" x="-50%" y="-50%" width="200%" height="200%">
        <feGaussianBlur stdDeviation="2" />
      </filter>
    </defs>
    <rect width="1080" height="1101" fill="#aad3df" />
    {tiles.map((t) => (
      <MapTile key={`${t.x}-${t.y}`} tile={t} />
    ))}

    {/* reed beds */}
    <path
      d="M0,240 h8 M10,245 h9 M3,251 h8 M14,254 h8 M0,261 h6 M9,264 h10 M518,260 h10 M530,255 h9 M524,265 h9"
      stroke="#4a90e0"
      strokeWidth="1"
    />
    {/* football grounds */}
    <path d="M430,72 L446,69 452,82 434,88Z" fill="#aae0cb" />
    <path d="M436,88 L445,84 455,96 449,102Z" fill="#8fdcc0" />
    {/* dam */}
    <path d="M762,312 L777,313 772,322 764,321Z" fill="#999" stroke="#666" strokeWidth=".8" />

    {/* cable car */}
    <g stroke="#777" fill="#000">
      <path d="M659,621 L745,587" />
      {[0, 1, 2, 3, 4, 5, 6, 7].map((i) => (
        <circle key={i} cx={659 + i * 12.3} cy={621 - i * 4.9} r="1.6" stroke="none" />
      ))}
    </g>

    {roadNames.map(([tile, gx, gy, angle, name], i) => {
      const { x, y } = place(tile, gx, gy);
      return (
        <RoadName key={i} transform={`translate(${x} ${y}) rotate(${angle})`} y="3">
          {name}
        </RoadName>
      );
    })}
    <text
      transform="translate(65 519) rotate(50)"
      textAnchor="middle"
      fontSize="11"
      fill="#1f9a3c"
      stroke="#e8f5e0"
      strokeWidth="1.6"
      paintOrder="stroke"
    >
      한려해상국립공원
    </text>
    <g fontSize="10.5" fill="#a077ab" textAnchor="middle">
      <text transform="translate(109 457) rotate(33)">거제시</text>
      <text transform="translate(309 750) rotate(22)">통영시</text>
      <text transform="translate(395 792) rotate(-88)">거제시</text>
    </g>
    <text transform="translate(86 38) rotate(-72)" textAnchor="middle" fontSize="9.5" fill="#5b8fd0">
      둔덕천
    </text>

    {[...summits.map(([t, gx, gy]) => place(t, gx, gy)),
      ...peaks.map(([t, gx, gy]) => {
        const p = place(t, gx, gy);
        return { x: p.x, y: p.y - 16 };
      })].map(({ x, y }, i) => (
      <path key={i} d={`M${x},${y - 3.5} l3.6,7 h-7.2Z`} fill="#d08c52" />
    ))}
    {peaks.map(([tile, gx, gy, name, height], i) => {
      const { x, y } = place(tile, gx, gy);
      return (
        <g key={i}>
          <Peak x={x} y={y}>{name}</Peak>
          {height && <Peak x={x} y={y + 11.8}>{height}</Peak>}
        </g>
      );
    })}
    {/* this name wraps, so its height sits a line lower */}
    <path d="M86,290 l3.6,7 h-7.2Z" fill="#d08c52" />
    <Peak x="86" y="309">놀고지등</Peak>
    <Peak x="86" y="322">산</Peak>
    <Peak x="86" y="334">72 m</Peak>
    {villages.map(([tile, gx, gy, name, town]) => {
      const { x, y } = place(tile, gx, gy);
      return (
        <Village key={name} x={x} y={y} $town={town}>
          {name}
        </Village>
      );
    })}
    {shields.map(([tile, gx, gy, primary, lines], i) => {
      const { x, y } = place(tile, gx, gy);
      const w = lines.includes("1018") ? 32 : 21;
      const h = lines.length * 12 + 4;
      return (
        <g key={i} transform={`translate(${x} ${y})`}>
          <rect
            x={-w / 2}
            y={-h / 2}
            width={w}
            height={h}
            rx="1.5"
            fill={primary ? "#f8e3cc" : "#f1f2d4"}
            stroke={primary ? "#d9ab85" : "#c3c594"}
          />
          {lines.map((text, n) => (
            <text
              key={text}
              y={-h / 2 + 11.8 + n * 12}
              fontFamily="Noto Sans"
              fontSize="10.2"
              textAnchor="middle"
              fill="#5c4a30"
            >
              {text}
            </text>
          ))}
        </g>
      );
    })}

    {arrows.map(([x, y, heading], i) => (
      <path
        key={i}
        transform={`translate(${x} ${y}) rotate(${heading})`}
        d="M0,-12.500 L11.500,-5 V12.500 L0,4.500 L-11.500,12.500 V-5Z"
        fill="#00f"
      />
    ))}
    <FlagPin x={492.7} y={37} finish />
    {kmPins.map(([km, x, y]) => (
      <KmPin key={km} km={km} x={x} y={y} />
    ))}
    <FlagPin x={599.4} y={865.5} />

    <g fontFamily="Liberation Serif" fontSize="58" fontWeight="700" fontStyle="italic">
      <text x="34" y="77" textLength="104" lengthAdjust="spacingAndGlyphs" fill="#362b28" stroke="#362b28" strokeWidth="1.6">
        Orux
      </text>
      <text x="138" y="77" textLength="115" lengthAdjust="spacingAndGlyphs" fill="#fff" stroke="#fff" strokeWidth="1.6">
        maps
      </text>
    </g>
    <text
      x="12"
      y="1058"
      fontSize="30"
      fontWeight="700"
      fontStyle="italic"
      textLength="58"
      fill="#1d1d1d"
    >
      5km
    </text>
    <rect x="6" y="1073" width="321" height="17" fill="#be0a25" />
    <text x="719" y="1091" fontSize="34" textLength="355" fill="#3f82e8">
      OpenStreetMap Mapnik
    </text>
    <path d="M718,1095 H1074" stroke="#3f82e8" strokeWidth="2" />
  </MapSvg>
);

const App = () => (
  <Page>
    <GlobalStyle />
    <Toolbar>
      <svg width="68" height="68" viewBox="0 0 24 24" fill="#fadee2">
        <path d="M20 11H7.83l5.59-5.59L12 4l-8 8 8 8 1.41-1.41L7.83 13H20v-2z" />
      </svg>
      <Spacer />
      <Actions>
        <svg width="80" height="68" viewBox="0 0 80 68" fill="none" stroke="#fadee2">
          <path strokeWidth="5" strokeLinejoin="round" d="M3.500,15 L26,3.500 54,15 76.500,3 74,31 76.500,54 54,64.500 26,53 3.500,64.500 6,40Z" />
          <path strokeWidth="2.600" d="M26,4 L28,28 26,53 M54,15 L51,39 54,64 M7,39 L28,28 51,39 74,29" />
        </svg>
        <svg width="74" height="68" viewBox="0 0 74 68" fill="#f6dce1" stroke="#f6dce1">
          <g stroke="none">
            <circle cx="11.500" cy="34" r="11.300" />
            <circle cx="62.500" cy="11.500" r="11.300" />
            <circle cx="62.500" cy="56.500" r="11.300" />
          </g>
          <path strokeWidth="5" d="M25,28 L50,17 M25,40 L50,51" />
        </svg>
        <svg width="52" height="56" viewBox="2 0 52 56" fill="#fadee2">
          <path d="M40,0 h14 v14 h-14Z M40,21 h14 v14 h-14Z M40,42 h14 v14 h-14Z" />
        </svg>
      </Actions>
    </Toolbar>
    <Summary>
      <TypeBox width="262" height="262" viewBox="0 0 262 262">
        <rect x="2.500" y="2.500" width="256" height="256" fill="none" stroke="#b0162e" strokeWidth="3" strokeDasharray="14 14" />
      </TypeBox>
      <SummaryText>
        <div>2024-03-30 05:04:36</div>
        <div>26.34 km (07:18:29)</div>
      </SummaryText>
    </Summary>
    <Divider />
    <Stats>
      {stats.flatMap(([label, value, rightLabel, rightValue]) => [
        <Stat key={label}>
          <StatLabel>{label}</StatLabel>
          <StatValue>{value}</StatValue>
        </Stat>,
        <Stat key={rightLabel} $right>
          <StatLabel>{rightLabel}</StatLabel>
          <StatValue>{rightValue}</StatValue>
        </Stat>,
      ])}
    </Stats>
    <Divider />
    <Chart />
    <RouteMap />
    <Footer>
      <FooterLine />
    </Footer>
  </Page>
);

export default App;
